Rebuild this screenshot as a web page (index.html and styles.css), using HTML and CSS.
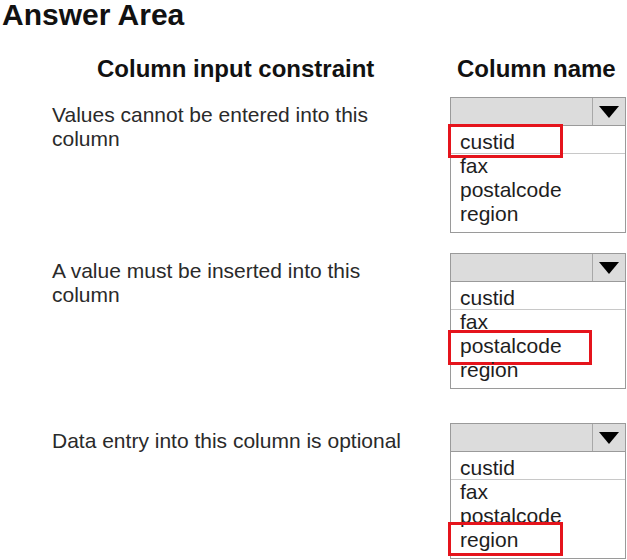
FILE: index.html
```html
<html lang="en">
<head>
    <meta charset="UTF-8">
    <meta name="viewport" content="width=device-width, initial-scale=1.0">
    <title>Answer Area</title>
    <link rel="stylesheet" href="styles.css">
</head>
<body>
    <h1 class="title">Answer Area</h1>
    <div class="table">
        <div class="row heads">
            <div class="head head-constraint">Column input constraint</div>
            <div class="head head-name">Column name</div>
        </div>
        <div class="row">
            <div class="prompt">Values cannot be entered into this column</div>
            <div class="drop">
                <div class="drop-head"><span class="arrow"></span></div>
                <ul class="drop-list">
                    <li class="pick">custid</li>
                    <li>fax</li>
                    <li>postalcode</li>
                    <li>region</li>
                </ul>
            </div>
        </div>
        <div class="row">
            <div class="prompt">A value must be inserted into this column</div>
            <div class="drop">
                <div class="drop-head"><span class="arrow"></span></div>
                <ul class="drop-list">
                    <li>custid</li>
                    <li>fax</li>
                    <li class="pick pick-wide">postalcode</li>
                    <li>region</li>
                </ul>
            </div>
        </div>
        <div class="row late">
            <div class="prompt">Data entry into this column is optional</div>
            <div class="drop">
                <div class="drop-head"><span class="arrow"></span></div>
                <ul class="drop-list">
                    <li>custid</li>
                    <li>fax</li>
                    <li>postalcode</li>
                    <li class="pick">region</li>
                </ul>
            </div>
        </div>
    </div>
</body>
</html>
```

FILE: styles.css
```css
body { margin: 0; background: #fff; font-family: "Liberation Sans", Arial, sans-serif; color: #222; overflow: hidden; }
.title { margin: 0; padding-left: 2px; font-size: 30px; line-height: 29px; font-weight: bold; color: #111; }
.table { display: flex; flex-direction: column; gap: 20px; margin-top: 26px; padding-left: 52px; }
.row { display: flex; }
.heads { margin-bottom: -6px; }
.late { margin-top: 14px; }
.head { font-size: 24px; line-height: 28px; font-weight: bold; color: #111; }
.head-constraint { width: 353px; padding-left: 45px; }
.head-name { padding-left: 7px; }
.prompt { width: 360px; margin-right: 38px; padding-top: 6px; font-size: 21px; line-height: 24px; color: #2a2a2a; }
.drop { width: 176px; }
.drop-head { display: flex; justify-content: flex-end; height: 27px; background: #dcdcdc; border: 1px solid #9a9a9a; }
.arrow { width: 32px; border-left: 1px solid #a8a8a8; display: flex; align-items: center; justify-content: center; }
.arrow::before { content: ''; border-left: 10px solid transparent; border-right: 10px solid transparent; border-top: 12px solid #000; }
.drop-list { list-style: none; margin: 0; padding: 4px 0 6px 0; border: 1px solid #9a9a9a; border-top: none; font-size: 21px; line-height: 24px; color: #1e1e1e; }
.drop-list li { position: relative; padding-left: 9px; }
.drop-list li:first-child { box-shadow: inset 0 -1px 0 #c8c8c8; }
.pick::after { content: ''; position: absolute; left: -3px; top: -6px; bottom: -4px; width: 109px; border: 3px solid #e5141c; }
.pick-wide::after { width: 138px; top: -4px; bottom: -7px; }
```
